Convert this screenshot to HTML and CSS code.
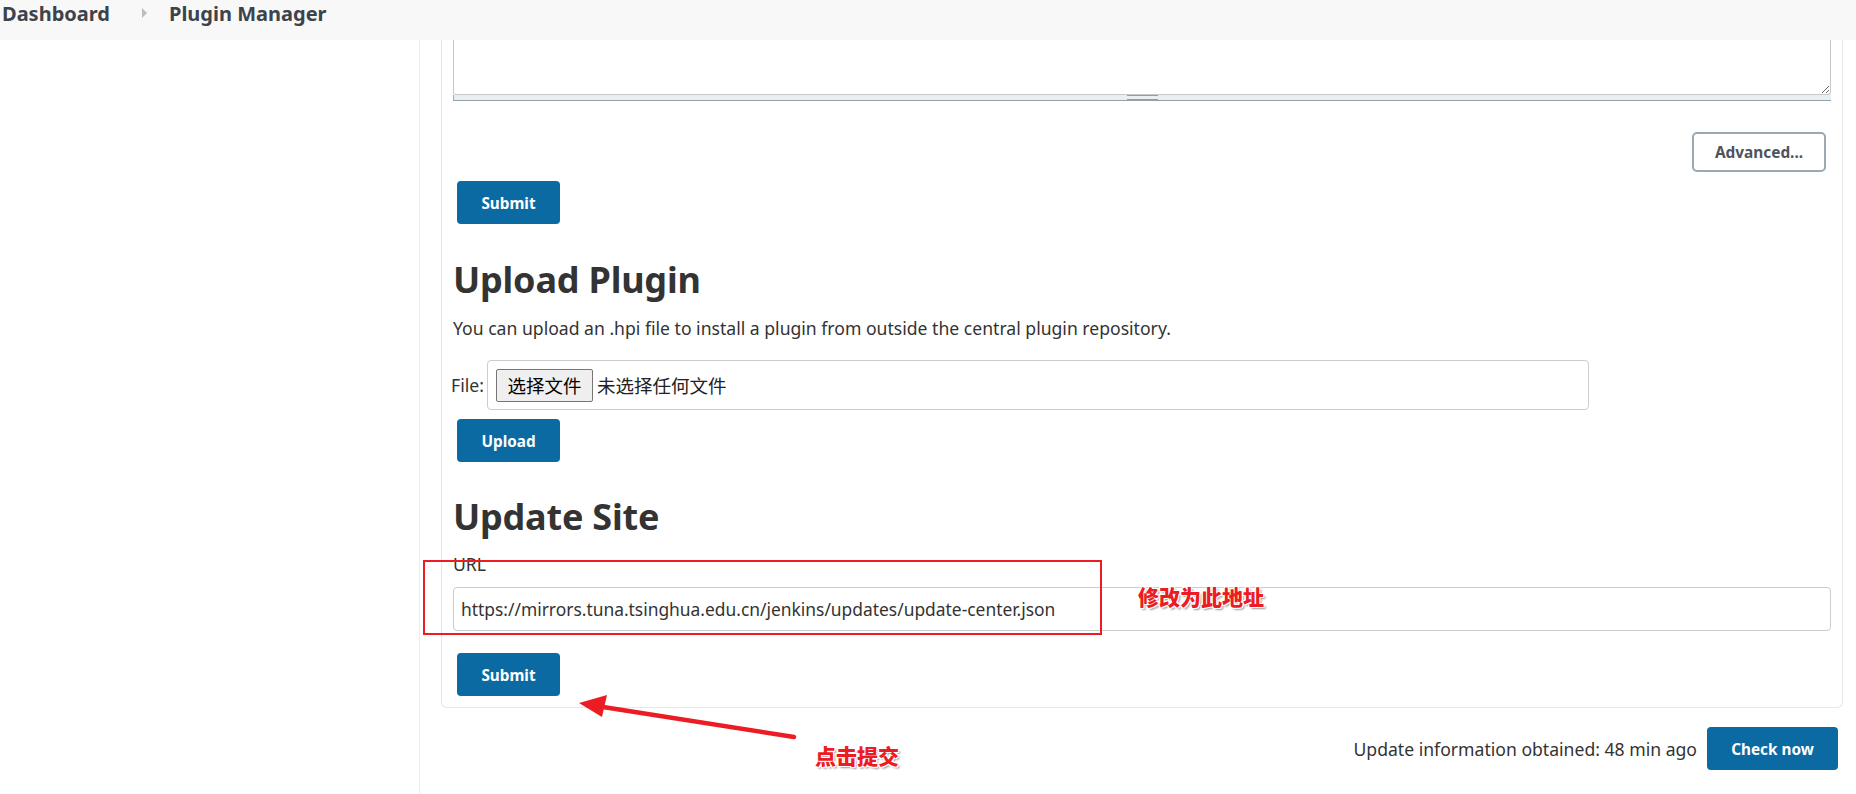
FILE: index.html
```html
<!DOCTYPE html>
<html lang="en">
<head>
	<meta charset="UTF-8">
	<title>Plugin Manager</title>
	<link rel="stylesheet" href="styles.css">
</head>
<body>
	<div class="breadcrumbs">
		<a class="crumb">Dashboard</a>
		<span class="chevron"></span>
		<a class="crumb">Plugin Manager</a>
	</div>

	<div class="page">
		<div class="side-panel"></div>

		<div class="main-panel">
			<div class="card">

				<!-- proxy config textarea, scrolled half out of view -->
				<div class="textarea-wrap">
					<textarea class="proxy-text"></textarea>
					<div class="textarea-handle"><span class="grip"></span></div>
				</div>

				<div class="advanced-row">
					<button class="btn-secondary">Advanced...</button>
				</div>
				<button class="btn-primary">Submit</button>

				<h1 class="section-title">Upload Plugin</h1>
				<p class="section-desc">You can upload an .hpi file to install a plugin from outside the central plugin repository.</p>

				<div class="file-row">
					<span class="file-label">File:</span>
					<div class="file-box">
						<span class="file-btn">选择文件</span>
						<span class="file-none">未选择任何文件</span>
					</div>
				</div>
				<button class="btn-primary">Upload</button>

				<h1 class="section-title title-site">Update Site</h1>
				<div class="field-label">URL</div>
				<input class="url-input" type="text" value="https://mirrors.tuna.tsinghua.edu.cn/jenkins/updates/update-center.json">
				<button class="btn-primary btn-last">Submit</button>
			</div>

			<div class="update-row">
				<span class="update-info">Update information obtained: 48 min ago</span>
				<button class="btn-primary btn-check">Check now</button>
			</div>
		</div>
	</div>

	<!-- screenshot annotations -->
	<div class="mark-box"></div>
	<div class="mark-text mark-url">修改为此地址</div>
	<div class="mark-text mark-submit">点击提交</div>
	<svg class="mark-arrow" width="240" height="60" viewBox="570 690 240 60">
		<line x1="603" y1="707" x2="794" y2="737" stroke="#ec1c24" stroke-width="4.5" stroke-linecap="round"/>
		<polygon points="579,703 607,695 602,717" fill="#ec1c24"/>
	</svg>
</body>
</html>
```

FILE: styles.css
```css
html, body {
	padding: 0;
	margin: 0;
}

body {
	position: relative;
	font-family: "Noto Sans", "Noto Sans CJK SC", sans-serif;
	color: #333;
	background: #fff;
	height: 794px;
	overflow: hidden;
}

/*/ Header /*/

.breadcrumbs {
	display: flex;
	align-items: flex-start;
	height: 40px;
	box-sizing: border-box;
	padding: 2px 0 0 2px;
	background: #f8f8f8;
}

.crumb {
	font-size: 20px;
	font-weight: 700;
	line-height: 24px;
	color: #3d434b;
}

.chevron {
	width: 0;
	height: 0;
	margin: 6px 22px 0 32px;
	border-left: 5px solid #bdbdbd;
	border-top: 5px solid transparent;
	border-bottom: 5px solid transparent;
}

/*/ Layout /*/

.page {
	display: flex;
	height: 754px;
}

.side-panel {
	width: 419px;
	flex-shrink: 0;
	border-right: 1px solid #ececec;
}

.main-panel {
	flex: 1;
	padding: 0 13px 0 21px;
}

.card {
	border: 1px solid #e3e8eb;
	border-top: none;
	border-radius: 0 0 6px 6px;
	padding: 0 11px 11px 11px;
}

/*/ Textarea /*/

.textarea-wrap {
	display: flex;
	flex-direction: column;
}

.proxy-text {
	display: block;
	height: 55px;
	box-sizing: border-box;
	border: 1px solid #c8c8c8;
	border-top: none;
	border-radius: 0 0 3px 3px;
	resize: vertical;
	font-family: inherit;
}

.textarea-handle {
	display: flex;
	justify-content: center;
	align-items: center;
	height: 6px;
	box-sizing: border-box;
	background: #e9eef0;
	border-left: 1px solid #a2acb3;
	border-bottom: 1px solid #96a1a9;
}

.grip {
	width: 31px;
	height: 3px;
	border-top: 1px solid #9a9a9a;
	border-bottom: 1px solid #9a9a9a;
}

/*/ Buttons /*/

.advanced-row {
	display: flex;
	justify-content: flex-end;
	margin-top: 31px;
}

.btn-secondary {
	width: 134px;
	height: 40px;
	margin-right: 5px;
	background: #fff;
	border: 2px solid #9ca8b0;
	border-radius: 5px;
	font-family: inherit;
	font-size: 15.4px;
	font-weight: 700;
	color: #4d545d;
}

.btn-primary {
	display: block;
	width: 103px;
	height: 43px;
	margin: 9px 0 0 4px;
	background: #0b6aa2;
	border: none;
	border-radius: 4px;
	font-family: inherit;
	font-size: 15.3px;
	font-weight: 700;
	color: #fff;
}

.btn-last {
	margin-top: 22px;
}

/*/ Sections /*/

.section-title {
	margin: 33px 0 0 0;
	font-size: 36px;
	font-weight: 700;
	line-height: 46px;
	color: #333;
	letter-spacing: -0.2px;
}

.title-site {
	margin-top: 32px;
}

.section-desc {
	margin: 13px 0 0 0;
	font-size: 17.6px;
	line-height: 24px;
}

.file-row {
	display: flex;
	align-items: center;
	margin-top: 20px;
}

.file-label {
	font-size: 17.6px;
	width: 36px;
	margin-left: -2px;
}

.file-box {
	display: flex;
	align-items: center;
	width: 1102px;
	height: 50px;
	box-sizing: border-box;
	border: 1px solid #ccc;
	border-radius: 4px;
	padding-left: 8px;
}

.file-btn {
	display: flex;
	align-items: center;
	justify-content: center;
	width: 97px;
	height: 33px;
	box-sizing: border-box;
	background: #efefef;
	border: 1px solid #767676;
	border-radius: 2px;
	font-size: 18.5px;
	color: #000;
}

.file-none {
	margin-left: 4px;
	font-size: 18.5px;
	color: #222;
}

.field-label {
	margin-top: 12px;
	font-size: 17.6px;
	line-height: 24px;
}

.url-input {
	display: block;
	width: 100%;
	height: 44px;
	margin-top: 11px;
	box-sizing: border-box;
	border: 1px solid #ccc;
	border-radius: 4px;
	padding: 0 7px;
	font-family: inherit;
	font-size: 17.4px;
	color: #333;
}

/*/ Footer row /*/

.update-row {
	display: flex;
	justify-content: flex-end;
	align-items: center;
	gap: 10px;
	margin-top: 19px;
	padding-right: 5px;
}

.update-info {
	font-size: 17.6px;
}

.btn-check {
	width: 131px;
	margin: 0;
}

/*/ Annotations /*/

.mark-box {
	position: absolute;
	left: 423px;
	top: 560px;
	width: 679px;
	height: 75px;
	box-sizing: border-box;
	border: 2px solid #ec1c24;
}

.mark-text {
	position: absolute;
	font-family: "Noto Sans CJK SC", sans-serif;
	font-size: 21px;
	font-weight: 900;
	line-height: 24px;
	color: #ec1c24;
	text-shadow: 1px 1px 0 #fff, -1px -1px 0 #fff, 1px -1px 0 #fff, -1px 1px 0 #fff, 2px 2px 2px #999;
}

.mark-url {
	left: 1138px;
	top: 584px;
}

.mark-submit {
	left: 815px;
	top: 743px;
}

.mark-arrow {
	position: absolute;
	left: 570px;
	top: 690px;
}
```
